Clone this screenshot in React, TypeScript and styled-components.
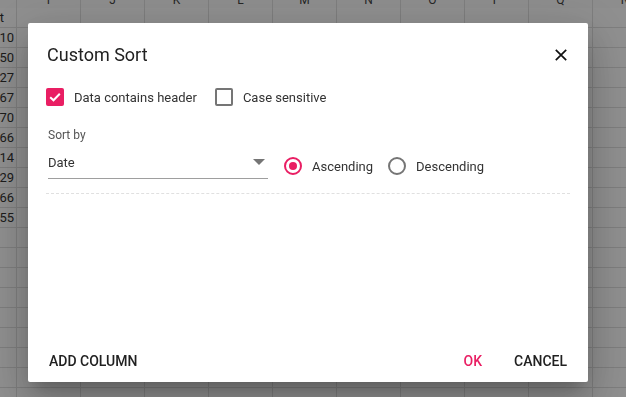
import React from "react";
import styled, { createGlobalStyle } from "styled-components";

const GlobalStyle = createGlobalStyle`
  html, body { margin: 0; padding: 0; }
  body {
    width: 626px;
    height: 397px;
    overflow: hidden;
    font-family: Roboto, "Noto Sans", Arial, sans-serif;
    background: #ffffff;
  }
  * { box-sizing: border-box; }
`;

const Sheet = styled.div`
  display: grid;
  grid-template-columns: 17px repeat(10, 64px);
  grid-auto-rows: 20px;
  margin-top: -12px;
  width: 657px;
  font-family: Roboto, Arial, sans-serif;
  font-size: 13px;
  color: #333;
`;

const HeadCell = styled.div`
  height: 25px;
  border-right: 1px solid #e0e0e0;
  border-bottom: 1px solid #e0e0e0;
  background: #fcfcfc;
  display: flex;
  align-items: center;
  justify-content: center;
  font-size: 12px;
  color: #444;
`;

const Cell = styled.div<{ $first?: boolean; $inset?: number }>`
  border-right: 1px solid #e0e0e0;
  border-bottom: 1px solid #e0e0e0;
  background: #fff;
  display: flex;
  align-items: center;
  justify-content: ${(p) => (p.$first ? "flex-end" : "flex-start")};
  overflow: hidden;
  white-space: nowrap;
  padding-right: ${(p) => (p.$first ? `${p.$inset ?? 2}px` : "0")};
`;

const Overlay = styled.div`
  position: fixed;
  inset: 0;
  background: rgba(0, 0, 0, 0.44);
`;

const Dialog = styled.div`
  position: fixed;
  left: 28px;
  top: 23px;
  width: 560px;
  height: 359px;
  background: #fff;
  border-radius: 2px;
  box-shadow: 0 11px 15px -7px rgba(0, 0, 0, 0.2),
    0 24px 38px 3px rgba(0, 0, 0, 0.14), 0 9px 46px 8px rgba(0, 0, 0, 0.12);
  display: flex;
  flex-direction: column;
  padding: 0 18px;
`;

const Header = styled.div`
  display: flex;
  align-items: center;
  justify-content: space-between;
  padding-top: 18px;
  height: 46px;
`;

const Title = styled.div`
  font-size: 18px;
  line-height: 28px;
  color: #212121;
  padding-left: 1px;
`;

const CloseButton = styled.button`
  border: none;
  background: transparent;
  padding: 0;
  width: 16px;
  height: 16px;
  margin-right: 1px;
  display: flex;
  align-items: center;
  justify-content: center;
  cursor: pointer;
`;

const CheckRow = styled.div`
  display: flex;
  align-items: center;
  gap: 18px;
  height: 24px;
  margin-top: 16px;
`;

const CheckItem = styled.label`
  display: flex;
  align-items: center;
  gap: 10px;
  font-size: 13px;
  color: #333;
  cursor: pointer;
`;

const Box = styled.span<{ $checked?: boolean }>`
  width: 18px;
  height: 18px;
  border-radius: 2px;
  display: flex;
  align-items: center;
  justify-content: center;
  background: ${(p) => (p.$checked ? "#e91e63" : "#fff")};
  border: ${(p) => (p.$checked ? "none" : "2px solid #757575")};
`;

const SortSection = styled.div`
  margin-top: 18px;
  margin-left: 2px;
`;

const SortLabel = styled.div`
  font-size: 12px;
  line-height: 16px;
  color: #555;
`;

const SortRow = styled.div`
  display: flex;
  align-items: flex-end;
  gap: 16px;
`;

const Dropdown = styled.div`
  width: 220px;
  height: 36px;
  padding-top: 4px;
  border-bottom: 1px solid #9e9e9e;
  display: flex;
  align-items: center;
  justify-content: space-between;
  font-size: 13px;
  color: #333;
`;

const Caret = styled.span`
  width: 0;
  height: 0;
  border-left: 6px solid transparent;
  border-right: 6px solid transparent;
  border-top: 6px solid #757575;
  margin-right: 3px;
  margin-top: -2px;
`;

const RadioGroup = styled.div`
  display: flex;
  align-items: center;
  gap: 15px;
  height: 24px;
  margin-bottom: 1px;
`;

const RadioItem = styled.label`
  display: flex;
  align-items: center;
  gap: 10px;
  font-size: 13px;
  color: #333;
  cursor: pointer;
`;

const RadioCircle = styled.span<{ $checked?: boolean }>`
  width: 18px;
  height: 18px;
  border-radius: 50%;
  border: 2px solid ${(p) => (p.$checked ? "#e91e63" : "#757575")};
  display: flex;
  align-items: center;
  justify-content: center;
  &::after {
    content: "";
    width: 8px;
    height: 8px;
    border-radius: 50%;
    background: ${(p) => (p.$checked ? "#e91e63" : "transparent")};
  }
`;

const Separator = styled.div`
  margin-top: 14px;
  border-top: 1px dashed #e0e0e0;
`;

const Spacer = styled.div`
  flex: 1;
`;

const Footer = styled.div`
  display: flex;
  align-items: center;
  justify-content: space-between;
  margin: 0 -5px 3px -5px;
`;

const Actions = styled.div`
  display: flex;
  gap: 16px;
`;

const TextButton = styled.button<{ $primary?: boolean }>`
  border: none;
  background: transparent;
  height: 36px;
  padding: 0 8px;
  font-family: Roboto, Arial, sans-serif;
  font-size: 14px;
  font-weight: 500;
  text-transform: uppercase;
  color: ${(p) => (p.$primary ? "#e91e63" : "#212121")};
  cursor: pointer;
`;

const columns = ["I", "J", "K", "L", "M", "N", "O", "P", "Q", "R"];
const values = ["t", "10", "50", "27", "67", "70", "66", "14", "29", "66", "55", "", "", "", "", "", "", "", "", ""];

export default function App() {
  return (
    <>
      <GlobalStyle />
      <Sheet>
        <HeadCell />
        {columns.map((c) => (
          <HeadCell key={c}>{c}</HeadCell>
        ))}
        {values.map((v, r) => (
          <React.Fragment key={r}>
            <Cell $first $inset={r === 0 ? 12 : 2}>{v}</Cell>
            {columns.map((c) => (
              <Cell key={c} />
            ))}
          </React.Fragment>
        ))}
      </Sheet>
      <Overlay />
      <Dialog>
        <Header>
          <Title>Custom Sort</Title>
          <CloseButton aria-label="Close">
            <svg width="14" height="14" viewBox="0 0 14 14">
              <path d="M1.8 1.8 L12.2 12.2 M12.2 1.8 L1.8 12.2" stroke="#111" strokeWidth="1.7" fill="none" />
            </svg>
          </CloseButton>
        </Header>
        <CheckRow>
          <CheckItem>
            <Box $checked>
              <svg width="14" height="14" viewBox="0 0 14 14">
                <path d="M2.2 7.2 L5.5 10.3 L11.8 3.8" stroke="#fff" strokeWidth="2" fill="none" />
              </svg>
            </Box>
            Data contains header
          </CheckItem>
          <CheckItem>
            <Box />
            Case sensitive
          </CheckItem>
        </CheckRow>
        <SortSection>
          <SortLabel>Sort by</SortLabel>
          <SortRow>
            <Dropdown>
              <span>Date</span>
              <Caret />
            </Dropdown>
            <RadioGroup>
              <RadioItem>
                <RadioCircle $checked />
                Ascending
              </RadioItem>
              <RadioItem>
                <RadioCircle />
                Descending
              </RadioItem>
            </RadioGroup>
          </SortRow>
        </SortSection>
        <Separator />
        <Spacer />
        <Footer>
          <TextButton>Add Column</TextButton>
          <Actions>
            <TextButton $primary>OK</TextButton>
            <TextButton>Cancel</TextButton>
          </Actions>
        </Footer>
      </Dialog>
    </>
  );
}
